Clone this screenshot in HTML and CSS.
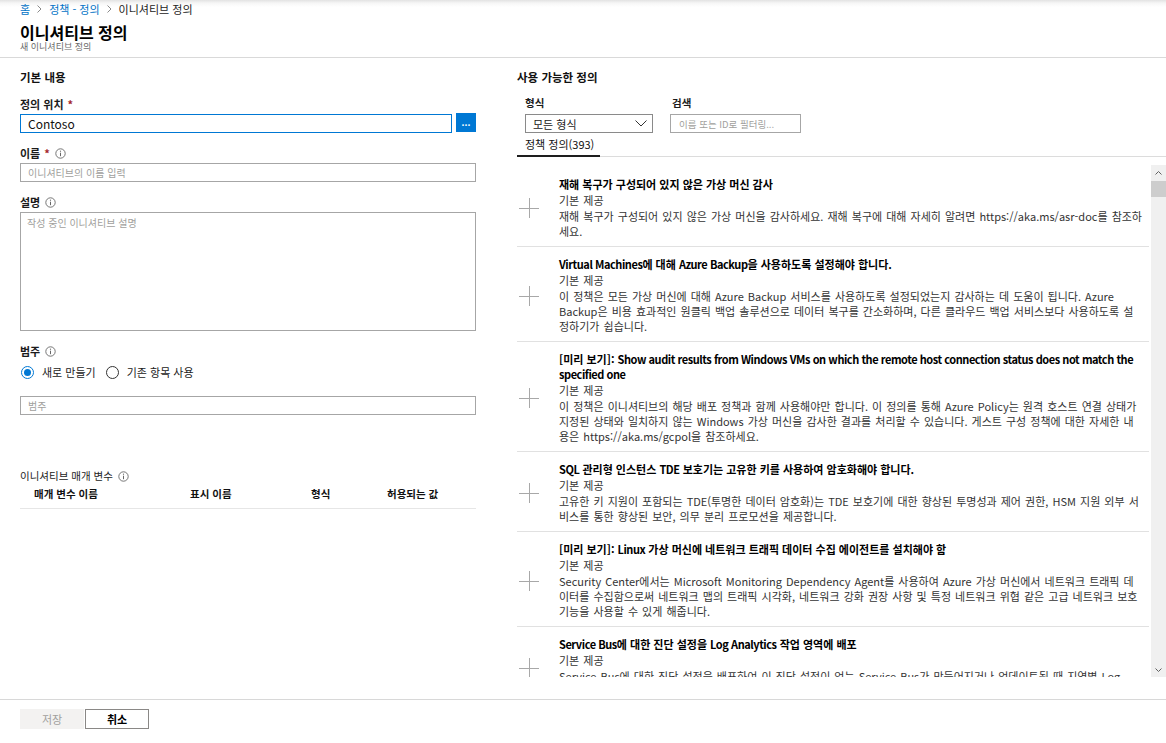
FILE: index.html
```html
<!DOCTYPE html>
<html lang="ko">
<head>
<meta charset="utf-8">
<title>이니셔티브 정의</title>
<link rel="stylesheet" href="styles.css">
</head>
<body>
<div class="page">
  <nav class="crumbs">
    <span class="crumb-link">홈</span>
    <span class="crumb-sep"><svg width="5" height="8" viewBox="0 0 5 8"><polyline points="0.5,0.5 4,4 0.5,7.5" fill="none" stroke="#8a8a8a" stroke-width="1"/></svg></span>
    <span class="crumb-link">정책 - 정의</span>
    <span class="crumb-sep"><svg width="5" height="8" viewBox="0 0 5 8"><polyline points="0.5,0.5 4,4 0.5,7.5" fill="none" stroke="#8a8a8a" stroke-width="1"/></svg></span>
    <span class="crumb-current">이니셔티브 정의</span>
  </nav>

  <header class="header">
    <h1 class="title">이니셔티브 정의</h1>
    <div class="subtitle">새 이니셔티브 정의</div>
  </header>

  <main class="main">
    <section class="left">
      <h2 class="section-title">기본 내용</h2>

      <div class="field first">
        <div class="label">정의 위치 <span class="req">*</span></div>
        <div class="input-row">
          <div class="input focused">Contoso</div>
          <div class="browse-btn">...</div>
        </div>
      </div>

      <div class="field">
        <div class="label">이름 <span class="req">*</span>
          <svg class="info" width="11" height="11" viewBox="0 0 11 11"><circle cx="5.5" cy="5.5" r="4.7" fill="none" stroke="#666" stroke-width="0.9"/><line x1="5.5" y1="4.7" x2="5.5" y2="8.2" stroke="#666" stroke-width="1"/><circle cx="5.5" cy="3.2" r="0.6" fill="#666"/></svg>
        </div>
        <div class="input placeholder">이니셔티브의 이름 입력</div>
      </div>

      <div class="field">
        <div class="label">설명
          <svg class="info" width="11" height="11" viewBox="0 0 11 11"><circle cx="5.5" cy="5.5" r="4.7" fill="none" stroke="#666" stroke-width="0.9"/><line x1="5.5" y1="4.7" x2="5.5" y2="8.2" stroke="#666" stroke-width="1"/><circle cx="5.5" cy="3.2" r="0.6" fill="#666"/></svg>
        </div>
        <div class="textarea placeholder">작성 중인 이니셔티브 설명</div>
      </div>

      <div class="field">
        <div class="label">범주
          <svg class="info" width="11" height="11" viewBox="0 0 11 11"><circle cx="5.5" cy="5.5" r="4.7" fill="none" stroke="#666" stroke-width="0.9"/><line x1="5.5" y1="4.7" x2="5.5" y2="8.2" stroke="#666" stroke-width="1"/><circle cx="5.5" cy="3.2" r="0.6" fill="#666"/></svg>
        </div>
        <div class="radio-row">
          <span class="radio checked"><span class="dot"></span></span>
          <span class="radio-label">새로 만들기</span>
          <span class="radio second"></span>
          <span class="radio-label">기존 항목 사용</span>
        </div>
        <div class="input placeholder cat">범주</div>
      </div>

      <div class="params">
        <div class="params-title">이니셔티브 매개 변수
          <svg class="info" width="11" height="11" viewBox="0 0 11 11"><circle cx="5.5" cy="5.5" r="4.7" fill="none" stroke="#666" stroke-width="0.9"/><line x1="5.5" y1="4.7" x2="5.5" y2="8.2" stroke="#666" stroke-width="1"/><circle cx="5.5" cy="3.2" r="0.6" fill="#666"/></svg>
        </div>
        <div class="params-head">
          <span>매개 변수 이름</span>
          <span>표시 이름</span>
          <span>형식</span>
          <span>허용되는 값</span>
        </div>
      </div>
    </section>

    <section class="right">
      <h2 class="section-title">사용 가능한 정의</h2>
      <div class="filters">
        <div class="filter type">
          <div class="label">형식</div>
          <div class="select">
            <span>모든 형식</span>
            <svg width="12" height="7" viewBox="0 0 12 7"><polyline points="0.5,0.5 6,6 11.5,0.5" fill="none" stroke="#333" stroke-width="1"/></svg>
          </div>
        </div>
        <div class="filter search">
          <div class="label">검색</div>
          <div class="search-box">이름 또는 ID로 필터링...</div>
        </div>
      </div>

      <div class="tabs">
        <div class="tab active">정책 정의(393)</div>
      </div>

      <div class="list">
        <div class="items">
          <div class="item">
            <div class="plus"><svg width="20" height="20" viewBox="0 0 20 20"><path d="M10.5 0V20M0 10.5H20" stroke="#a8a8a8" stroke-width="1" fill="none"/></svg></div>
            <div class="item-body">
              <div class="item-title">재해 복구가 구성되어 있지 않은 가상 머신 감사</div>
              <div class="item-sub">기본 제공</div>
              <div class="item-desc">재해 복구가 구성되어 있지 않은 가상 머신을 감사하세요. 재해 복구에 대해 자세히 알려면 https://aka.ms/asr-doc를 참조하세요.</div>
            </div>
          </div>
          <div class="item">
            <div class="plus"><svg width="20" height="20" viewBox="0 0 20 20"><path d="M10.5 0V20M0 10.5H20" stroke="#a8a8a8" stroke-width="1" fill="none"/></svg></div>
            <div class="item-body">
              <div class="item-title"><span class="en">Virtual Machines</span>에 대해 <span class="en">Azure Backup</span>을 사용하도록 설정해야 합니다.</div>
              <div class="item-sub">기본 제공</div>
              <div class="item-desc">이 정책은 모든 가상 머신에 대해 Azure Backup 서비스를 사용하도록 설정되었는지 감사하는 데 도움이 됩니다. Azure Backup은 비용 효과적인 원클릭 백업 솔루션으로 데이터 복구를 간소화하며, 다른 클라우드 백업 서비스보다 사용하도록 설정하기가 쉽습니다.</div>
            </div>
          </div>
          <div class="item">
            <div class="plus"><svg width="20" height="20" viewBox="0 0 20 20"><path d="M10.5 0V20M0 10.5H20" stroke="#a8a8a8" stroke-width="1" fill="none"/></svg></div>
            <div class="item-body">
              <div class="item-title">[미리 보기]: <span class="en">Show audit results from Windows VMs on which the remote host connection status does not match the specified one</span></div>
              <div class="item-sub">기본 제공</div>
              <div class="item-desc">이 정책은 이니셔티브의 해당 배포 정책과 함께 사용해야만 합니다. 이 정의를 통해 Azure Policy는 원격 호스트 연결 상태가 지정된 상태와 일치하지 않는 Windows 가상 머신을 감사한 결과를 처리할 수 있습니다. 게스트 구성 정책에 대한 자세한 내용은 https://aka.ms/gcpol을 참조하세요.</div>
            </div>
          </div>
          <div class="item">
            <div class="plus"><svg width="20" height="20" viewBox="0 0 20 20"><path d="M10.5 0V20M0 10.5H20" stroke="#a8a8a8" stroke-width="1" fill="none"/></svg></div>
            <div class="item-body">
              <div class="item-title"><span class="en">SQL</span> 관리형 인스턴스 <span class="en">TDE</span> 보호기는 고유한 키를 사용하여 암호화해야 합니다.</div>
              <div class="item-sub">기본 제공</div>
              <div class="item-desc">고유한 키 지원이 포함되는 TDE(투명한 데이터 암호화)는 TDE 보호기에 대한 향상된 투명성과 제어 권한, HSM 지원 외부 서비스를 통한 향상된 보안, 의무 분리 프로모션을 제공합니다.</div>
            </div>
          </div>
          <div class="item">
            <div class="plus"><svg width="20" height="20" viewBox="0 0 20 20"><path d="M10.5 0V20M0 10.5H20" stroke="#a8a8a8" stroke-width="1" fill="none"/></svg></div>
            <div class="item-body">
              <div class="item-title">[미리 보기]: <span class="en">Linux</span> 가상 머신에 네트워크 트래픽 데이터 수집 에이전트를 설치해야 함</div>
              <div class="item-sub">기본 제공</div>
              <div class="item-desc">Security Center에서는 Microsoft Monitoring Dependency Agent를 사용하여 Azure 가상 머신에서 네트워크 트래픽 데이터를 수집함으로써 네트워크 맵의 트래픽 시각화, 네트워크 강화 권장 사항 및 특정 네트워크 위협 같은 고급 네트워크 보호 기능을 사용할 수 있게 해줍니다.</div>
            </div>
          </div>
          <div class="item">
            <div class="plus"><svg width="20" height="20" viewBox="0 0 20 20"><path d="M10.5 0V20M0 10.5H20" stroke="#a8a8a8" stroke-width="1" fill="none"/></svg></div>
            <div class="item-body">
              <div class="item-title"><span class="en">Service Bus</span>에 대한 진단 설정을 <span class="en">Log Analytics</span> 작업 영역에 배포</div>
              <div class="item-sub">기본 제공</div>
              <div class="item-desc">Service Bus에 대한 진단 설정을 배포하여 이 진단 설정이 없는 Service Bus가 만들어지거나 업데이트될 때 지역별 Log Analytics 작업 영역으로 로그를 스트리밍합니다.</div>
            </div>
          </div>
        </div>
        <div class="scrollbar">
          <div class="sb-btn"><svg width="7" height="4" viewBox="0 0 7 4"><polyline points="0.5,3.5 3.5,0.5 6.5,3.5" fill="none" stroke="#606060" stroke-width="1"/></svg></div>
          <div class="sb-thumb"></div>
          <div class="sb-track"></div>
          <div class="sb-btn"><svg width="7" height="4" viewBox="0 0 7 4"><polyline points="0.5,0.5 3.5,3.5 6.5,0.5" fill="none" stroke="#606060" stroke-width="1"/></svg></div>
        </div>
      </div>
    </section>
  </main>

  <footer class="footer">
    <div class="btn save">저장</div>
    <div class="btn cancel">취소</div>
  </footer>
</div>
</body>
</html>
```

FILE: styles.css
```css
* {
  box-sizing: border-box;
  margin: 0;
  padding: 0;
}

html, body {
  width: 1166px;
  height: 743px;
  overflow: hidden;
  background: #fff;
}

body {
  font-family: "Noto Sans CJK KR", "Noto Sans", sans-serif;
  font-size: 11px;
  color: #222;
}

.page {
  display: flex;
  flex-direction: column;
  height: 743px;
}

/* breadcrumb */
.crumbs {
  height: 17px;
  flex: none;
  display: flex;
  align-items: center;
  padding-left: 20px;
  background: linear-gradient(#e2e2e2 0, #f6f6f6 3px, #fff 7px);
  font-size: 11px;
  line-height: 14px;
}

.crumb-link {
  color: #0072c6;
}

.crumb-sep {
  display: flex;
  margin: 0 7px 0 7px;
}

.crumb-current {
  color: #222;
}

/* header */
.header {
  height: 41px;
  flex: none;
  padding: 6px 20px 0;
  border-bottom: 1px solid #d9d9d9;
}

.title {
  font-size: 16px;
  font-weight: 700;
  line-height: 18px;
  color: #000;
}

.subtitle {
  font-size: 9px;
  line-height: 12px;
  color: #6b6b6b;
}

/* main */
.main {
  flex: 1;
  display: flex;
  min-height: 0;
}

.left {
  width: 476px;
  flex: none;
  padding: 11px 0 0 20px;
}

.section-title {
  font-size: 11.5px;
  font-weight: 700;
  line-height: 16px;
  color: #111;
}

.field {
  margin-top: 12px;
}

.field.first {
  margin-top: 11px;
}

.label {
  display: flex;
  align-items: center;
  gap: 4px;
  font-weight: 700;
  line-height: 16px;
  color: #1b1b1b;
}

.req {
  color: #a4262c;
  font-weight: 700;
}

.info {
  display: block;
  margin-left: 1px;
}

.input-row {
  display: flex;
  align-items: flex-start;
  gap: 4px;
  margin-top: 2px;
}

.input {
  height: 19px;
  border: 1px solid #a6a6a6;
  padding-left: 7px;
  display: flex;
  align-items: center;
  margin-top: 2px;
  font-size: 10px;
}

.input.focused {
  flex: 1;
  margin-top: 0;
  border-color: #0078d4;
  color: #111;
  font-size: 12px;
}

.placeholder {
  color: #a19f9d;
}

.browse-btn {
  width: 20px;
  height: 19px;
  background: #0078d4;
  color: #fff;
  font-size: 9px;
  font-weight: 700;
  line-height: 19px;
  text-align: center;
  margin-top: -1px;
}

.textarea {
  height: 119px;
  border: 1px solid #a6a6a6;
  margin-top: 2px;
  padding: 2px 6px;
  font-size: 10px;
  line-height: 15px;
}

.radio-row {
  display: flex;
  align-items: center;
  height: 16px;
  margin-top: 5px;
  padding-left: 1px;
}

.radio {
  width: 13px;
  height: 13px;
  border: 1px solid #333;
  border-radius: 50%;
  display: flex;
  align-items: center;
  justify-content: center;
  flex: none;
}

.radio.checked {
  border-color: #0078d4;
}

.radio .dot {
  width: 7px;
  height: 7px;
  border-radius: 50%;
  background: #0078d4;
}

.radio.second {
  margin-left: 10px;
}

.radio-label {
  margin-left: 8px;
  color: #222;
  line-height: 16px;
}

.input.cat {
  margin-top: 16px;
}

.params {
  margin-top: 53px;
}

.params-title {
  display: flex;
  align-items: center;
  gap: 4px;
  line-height: 16px;
  font-size: 10.5px;
  color: #222;
}

.params-head {
  display: grid;
  grid-template-columns: 156px 121px 76px 1fr;
  padding: 2px 0 6px 14px;
  border-bottom: 1px solid #e6e6e6;
  font-weight: 700;
  font-size: 10.5px;
  line-height: 16px;
  color: #111;
}

/* right */
.right {
  flex: 1;
  min-width: 0;
  padding: 11px 0 0 41px;
  display: flex;
  flex-direction: column;
}

.filters {
  display: flex;
  padding-left: 8px;
  margin-top: 10px;
}

.filter.type {
  width: 128px;
}

.filter.search {
  width: 131px;
  margin-left: 17px;
}

.filter .label {
  font-size: 10.5px;
}

.filter.search .label {
  padding-left: 2px;
}

.select {
  height: 19px;
  margin-top: 3px;
  border: 1px solid #8a8a8a;
  display: flex;
  align-items: center;
  justify-content: space-between;
  padding: 0 5px 0 7px;
  color: #222;
}

.search-box {
  height: 19px;
  margin-top: 3px;
  border: 1px solid #a6a6a6;
  padding-left: 8px;
  display: flex;
  align-items: center;
  font-size: 9.5px;
  color: #a19f9d;
}

.tabs {
  display: flex;
  margin-top: 3px;
  border-bottom: 1px solid #dcdcdc;
}

.tab {
  padding: 0 6px 3px 8px;
  line-height: 16px;
  margin-bottom: -1px;
  border-bottom: 2px solid #1e1e1e;
  color: #111;
}

.list {
  display: flex;
  height: 512px;
  margin-top: 8px;
}

.items {
  flex: 1;
  min-width: 0;
  overflow: hidden;
  padding: 2px 2px 0 0;
}

.item {
  display: flex;
  align-items: center;
  padding: 10px 6px 7px 0;
  border-bottom: 1px solid #e1e1e1;
}

.plus {
  width: 42px;
  flex: none;
  display: flex;
  padding-left: 2px;
}

.plus svg {
  display: block;
}

.item-body {
  flex: 1;
  min-width: 0;
}

.item-title {
  font-weight: 700;
  line-height: 15px;
  color: #000;
}

.item-title .en {
  letter-spacing: -0.45px;
}

.item-sub {
  line-height: 17px;
  color: #333;
  word-spacing: 1px;
}

.item-desc {
  line-height: 15px;
  color: #333;
  word-spacing: 1px;
}

.scrollbar {
  width: 15px;
  flex: none;
  background: #f0f0f0;
  display: flex;
  flex-direction: column;
}

.sb-btn {
  height: 15px;
  flex: none;
  display: flex;
  align-items: center;
  justify-content: center;
}

.sb-thumb {
  height: 16px;
  margin-top: 1px;
  flex: none;
  background: #cdcdcd;
}

.sb-track {
  flex: 1;
}

/* footer */
.footer {
  height: 44px;
  flex: none;
  border-top: 1px solid #d8d8d8;
  display: flex;
  align-items: flex-start;
  gap: 1px;
  padding: 9px 20px 0;
}

.btn {
  width: 64px;
  height: 20px;
  display: flex;
  align-items: center;
  justify-content: center;
  font-size: 11px;
}

.btn.save {
  background: #f3f2f1;
  color: #a19f9d;
}

.btn.cancel {
  border: 1px solid #8a8886;
  color: #000;
  font-weight: 700;
}
```
